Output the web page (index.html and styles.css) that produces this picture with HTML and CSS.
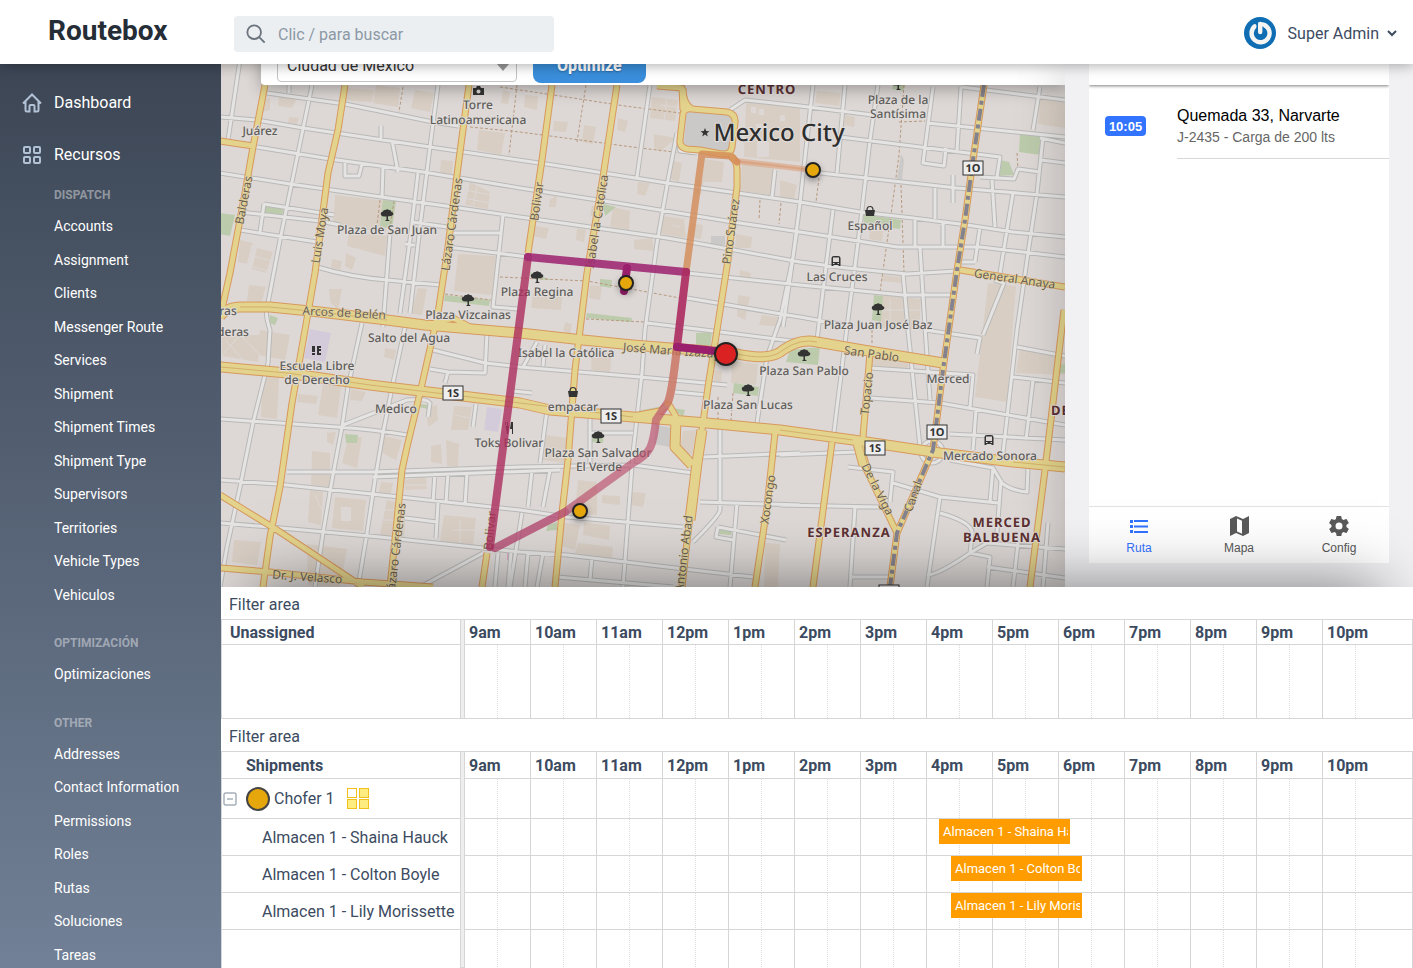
FILE: index.html
```html
<!DOCTYPE html>
<html lang="es">
<head>
<meta charset="utf-8">
<meta name="viewport" content="width=device-width, initial-scale=1">
<title>Routebox</title>
<link rel="stylesheet" href="styles.css">
</head>
<body>
<header class="topbar">
  <a class="brand" href="#">Routebox</a>
  <label class="search">
    <svg class="search-icon" viewBox="0 0 22 22" aria-hidden="true"><circle cx="9" cy="9" r="7.5"/><path d="M14.5 14.5l6 6"/></svg>
    <input type="search" placeholder="Clic / para buscar" aria-label="Buscar">
  </label>
  <button class="account" type="button">
    <svg class="avatar" viewBox="0 0 32 32" aria-hidden="true"><circle cx="16" cy="16" r="16" fill="#0f6db3"/><path d="M10.800 9.300a9 9 0 1 0 9-1.500" fill="none" stroke="#f4f4f2" stroke-width="4.400" stroke-linecap="round"/><path d="M16 6.800v8" stroke="#0f6db3" stroke-width="7" stroke-linecap="round"/><path d="M16.200 7v8" stroke="#f4f4f2" stroke-width="4.400" stroke-linecap="round"/><path d="M16.200 7q4 0 6.500 3" fill="none" stroke="#f4f4f2" stroke-width="4" stroke-linecap="round"/></svg>
    <span>Super Admin</span>
    <svg class="chevron" viewBox="0 0 10 7" aria-hidden="true"><path d="M1 1l4 4 4-4"/></svg>
  </button>
</header>

<div class="shell">
<nav class="sidebar" aria-label="Principal">
  <a class="nav-main" href="#"><svg viewBox="0 0 20 20" aria-hidden="true"><path d="M1 10.500L10 1.500l9 9M3.500 8.500V17a1.500 1.500 0 0 0 1.500 1.500h2.500V13a1 1 0 0 1 1-1h3a1 1 0 0 1 1 1v5.500H15a1.500 1.500 0 0 0 1.500-1.500V8.500"/></svg>Dashboard</a>
  <a class="nav-main" href="#"><svg viewBox="0 0 20 20" aria-hidden="true"><rect x="2" y="2" width="6" height="6" rx="1"/><rect x="12" y="2" width="6" height="6" rx="1"/><rect x="2" y="12" width="6" height="6" rx="1"/><rect x="12" y="12" width="6" height="6" rx="1"/></svg>Recursos</a>
  <h2>Dispatch</h2>
  <ul>
    <li><a href="#">Accounts</a></li><li><a href="#">Assignment</a></li><li><a href="#">Clients</a></li><li><a href="#">Messenger Route</a></li><li><a href="#">Services</a></li><li><a href="#">Shipment</a></li><li><a href="#">Shipment Times</a></li><li><a href="#">Shipment Type</a></li><li><a href="#">Supervisors</a></li><li><a href="#">Territories</a></li><li><a href="#">Vehicle Types</a></li><li><a href="#">Vehiculos</a></li>
  </ul>
  <h2>Optimización</h2>
  <ul><li><a href="#">Optimizaciones</a></li></ul>
  <h2>Other</h2>
  <ul>
    <li><a href="#">Addresses</a></li><li><a href="#">Contact Information</a></li><li><a href="#">Permissions</a></li><li><a href="#">Roles</a></li><li><a href="#">Rutas</a></li><li><a href="#">Soluciones</a></li><li><a href="#">Tareas</a></li>
  </ul>
</nav>

<main class="content">
<section class="stage">
  <div class="map-pane">
    <svg class="map" viewBox="221 64 844 523" preserveAspectRatio="xMidYMid slice" role="img" aria-label="Mapa de rutas">
      <defs>
        <g id="tree"><path d="M-6 0q-1-3 2-3.500 0-2 2.500-1.500 1.500-1.500 3.500 0 2.500 0 2.500 2 2.500.5 1.500 3-2 1.500-5 1.200V4.500l2 1.500h-5l1.500-1.500V1.500Q-5 2-6 0z"/></g>
        <g id="basket"><path d="M-5-1H5L4 5H-4z"/><path d="M-3-1q0-3.500 3-3.500T3-1" fill="none" stroke="#333" stroke-width="1.200"/></g>
        <g id="bus"><path d="M-4.500 5V-3Q-4.500-5-2-5H2Q4.500-5 4.500-3V5H2.500V4h-5v1z"/><rect x="-3" y="-3.500" width="6" height="4.500" fill="#ddd8d6"/><path d="M-3 2.500h1.500M1.500 2.500H3" stroke="#ddd8d6"/></g>
        <g id="shield-s"><rect x="-10" y="-7" width="20" height="14" fill="#eee" stroke="#333"/><text y="4" class="shield-text">1S</text></g>
        <g id="shield-o"><rect x="-10" y="-7" width="20" height="14" fill="#eee" stroke="#333"/><text y="4" class="shield-text">1O</text></g>
        <path id="white-roads" d="M240 60L228 140M220 117L257 120 303 128 430 147 553 165 667 183 800 202 860 212 913 218 967 225 1013 232 1065 237M267 93L345 104 433 122 458 126M257 147L330 159 423 172 520 188 617 203 733 222 800 232 897 247H980L1065 257M220 173L290 184 367 195 453 207 520 217 667 238 707 245 800 262 847 268 907 274 957 271M240 212L320 221 340 225M264 204L334 215M264 204L260 232M240 230L317 242M317 267Q350 277 387 280L440 285M447 247L497 253 528 257M312 85L298 153 280 240 268 303Q264 312 270 330L268 363 253 423 240 487 227 547 220 587M438 85L430 147 420 227 410 313M418 173L410 240 400 313M383 167L382 197M390 233L383 327M362 323L348 387 342 427 332 480 323 533 315 587M405 327L393 383 383 433 375 480 367 533 358 587M503 215L493 307 518 309M453 233H502M398 172L392 140M381 139V126M345 163V176H359L362 164M289 93V85M412 222L447 227M405 244L415 245M220 419L337 427Q370 429 407 435M343 425L407 400Q427 398 430 403L428 417M287 472H373L520 467 633 465 693 473M373 477L560 470M220 480L277 484 400 497 520 510 567 517 683 527M220 523L270 527 380 537 483 548 520 552 567 555 667 567 753 577M557 577L673 587M483 553L420 587M435 473L433 502M448 473L446 502M467 473L465 505M438 503L436 538M405 518L437 522M487 333L485 373 448 372 445 383M433 350L485 363 520 367 640 377 727 385M430 369L448 372M476 404L473 427M498 553L495 587M511 553L508 587M650 85L637 177M677 133L668 180 657 243 645 330 642 373 633 453 628 520 623 587M677 133L680 151 697 153M730 110L745 100 800 106 873 115M687 298L787 315 800 317 850 326M687 273L800 285 903 295H953M775 170L772 197M797 230L783 327M813 85L800 203 793 257 780 320 767 357 757 423M845 85L837 173M878 85L870 140 860 227 847 327 833 440M833 210L817 340M933 87L923 163 944 166 946 148M961 87L957 150M1040 87L1033 130M1043 137L1037 193 1027 260 1017 330 1003 453M1013 193L1000 273M992 180L995 227M927 123L1065 137M962 87L1065 100M840 137L1000 157 997 177M980 177L1014 179 1018 169 1040 172M820 173L957 188 1065 197M935 188V219M915 220V246M943 223V247M980 227L975 262M953 175V203M920 247L925 327 930 400M903 273L908 330 920 447M958 262H975M870 368L973 375 970 407M870 398L940 403 1065 425M950 434L1065 440M976 410L973 450M1033 380L1026 440M1017 347L1065 356M1013 377L1065 383M925 330L980 338 977 354M780 455L857 452M848 467L893 472 890 502M893 483L940 497 998 503M993 467L990 502M1001 480L997 533M780 505L880 507M855 507L850 587M940 497L927 587M940 513Q975 523 972 535L970 553Q938 575 927 575M970 553L987 543 1065 549M970 553L990 557 987 587M850 577H890M987 567L1065 578M1018 543L1013 587M1048 523L1043 587M950 460L993 468 1002 483Q1010 490 1027 492L1028 467M994 280L1004 283 983 335M513 391L532 393M547 410L540 463M590 417V463M590 433H633M675 392L707 395M720 430V510Q720 515 693 542M703 457L800 453M700 502L800 505M737 503L730 587M718 527L786 540M718 527L716 537 733 540M532 470L528 507M550 470L543 507M522 513L510 587M543 553L537 587M592 557L590 580M537 342L523 367M545 345L543 366M647 323L705 330 800 342M528 553L525 587M1040 138L1065 143M1041 160L1065 163"/>
        <path id="minor-yellow" d="M265 85L253 147 245 193 230 273 220 318M345 85L338 130 328 173 315 273 305 330 292 403 280 487 270 537 263 587M469 85L458 167 448 247 438 313 432 340 420 393 407 447 402 470 397 520 390 587M552 85L542 160 528 253M487 553L482 587M617 85L603 177 587 273 580 330 575 370 568 460 562 513 555 587M657 86L682 88 683 110M692 109L727 112Q736 114 735 123L732 147Q731 155 722 154L700 150 687 149Q679 147 680 140L683 114Q684 108 692 109M683 88Q683 104 692 109M730 155Q737 160 737 170V187L728 260 717 330 708 387 702 430 697 463 688 533 682 587M858 443L865 467 897 533M870 353L863 437M775 433L767 507 755 587M832 442L813 587M1064 310L1045 470 1030 587M960 270L1065 287M220 495L277 530 363 587M220 568L270 572 363 582 433 587M220 141L253 146M984 85L973 160 965 220 957 270 943 370 933 450 917 487 897 533 890 587M668 403L678 420M633 416L660 411 670 403M425 326L453 318 470 327"/>
        <path id="major-yellow" d="M220 316Q228 307 240 307H270L320 312 387 320 425 325 520 333 583 340 633 345 733 353Q770 362 783 350 800 338 817 342L863 350 943 363M220 367L287 373 370 385 520 403 550 410 633 417 707 423 780 430 853 440 940 453 1013 462 1065 467M702 430L697 463 690 520M676 420L675 447 692 465M858 443L864 465"/>
      </defs>
      <rect x="221" y="64" width="844" height="523" fill="#ddd8d6"/>
      <g fill="#d8cec4">
        <path d="M335 195L387 201 386 232 333 226zM349 232L387 236 385 256 347 246zM345 88L374 90 372 102 343 100zM376 85L400 88 398 107 373 103zM458 254L496 256 492 295 454 291zM479 130L505 133 501 155 477 150zM441 160L453 161 452 174 440 173zM260 100L270 98 270 110 260 112zM279 96L297 98 292 108 278 106zM289 117L299 118 297 124 288 123zM490 192L470 182 465 205 488 209zM415 90L434 93 430 112 411 108zM240 240L253 243 248 264 238 262zM257 248L273 252 266 273 252 269zM249 285L266 287 261 303 247 301zM332 259L342 261 340 270 331 268zM346 253L356 258 352 270 345 266zM329 289L342 289 338 310 330 302zM418 288L427 289 422 315 411 314zM262 372L279 378 277 419 261 417zM298 394L318 396 316 404 297 402zM323 382L341 385 337 418 318 415zM351 389L366 392 362 401 350 400zM312 451L330 453 330 487 311 485zM327 433L336 432 333 445 327 442zM348 438L362 437 357 468 342 463zM384 436L402 440 396 460 382 453zM335 497L366 500 363 531 332 528zM381 482L393 483 390 497 378 496zM310 490L323 492 321 525 308 522zM234 540L261 542 257 565 232 562zM307 544L347 549 340 587 308 585zM446 440L459 444 458 467 447 466zM431 446L441 444 442 464 431 462zM404 480L426 477 427 489 405 490zM426 408L437 405 438 420 428 427zM454 406L472 407 468 430 451 430zM387 500L406 505 404 540 380 535zM444 515L476 518 473 546 440 541zM385 348L396 350 394 360 384 357z"/>
        <path d="M525 95L538 96 537 110 524 107zM503 90L510 92 508 104 501 103zM554 121L568 122 566 132 553 131zM584 125L596 127 593 144 582 142zM618 118L628 121 625 132 617 130zM652 97L678 100 675 121 650 118zM654 134L676 138 660 152 654 148zM670 160L682 163 679 182 668 178zM705 159L724 162 722 182 702 182zM742 161L774 168 771 195 740 191zM746 103L800 106V162L744 157zM662 216L684 219 686 238 661 234zM690 223L703 225 701 239 689 237zM696 180L704 181 701 195 695 193zM613 207L630 211 629 230 610 227zM592 206L600 207 597 218 590 215zM535 226L549 228 546 239 533 236zM634 240L652 238 654 251 634 249zM736 234L752 237 751 248 735 248zM740 270L751 273 750 281 739 280zM577 228L586 230 584 242 576 240zM550 200L557 194 556 207 549 207zM638 182L650 183 645 196 637 194zM590 285L602 286 600 300 589 298zM533 293L562 297 561 310 531 308zM738 295L750 297 745 320 737 316zM762 315L785 318 783 327 759 325zM565 322L572 324 570 334 563 331zM592 349L612 350 610 373 591 370zM732 361L758 364 756 385 731 383zM714 370L722 371 721 385 714 384zM683 431L696 430 692 455 680 448zM546 435L567 438 564 463 543 460zM578 480L597 482 597 515 575 513zM602 495L620 496 620 505 602 503zM632 492L646 493 643 507 631 505zM561 522L580 525 575 550 558 545zM584 522L610 526 609 540 583 535zM578 543L613 547 612 558 575 553zM765 543L780 544 778 587 764 587z"/>
        <path d="M817 91L841 93 839 106 815 103zM780 116L792 117 786 145 780 145zM845 115L855 117 854 127 844 125zM1040 98L1065 103V128L1038 124zM780 180L797 185 794 200 780 197zM870 230L883 231 882 241 869 239zM883 275L902 277V283L882 281zM882 295L921 299 919 330 878 328zM988 283L1016 286 1007 402 975 397zM1020 347L1065 354V375L1016 373zM871 358L908 361V370L871 367zM260 330L290 335 285 360 258 355zM222 335L262 335 258 362 222 356z"/>
      </g>
      <path fill="#ddd8d6" d="M341 507h10v14h-10zM751 107h5v6h-5zM759 109h5v6h-5zM780 115h5v6h-5zM756 124h6v7h-6zM757 142h12v15h-12z"/>
      <g stroke="#ddd8d6" fill="none"><path d="M235 330L262 357M225 340L248 365M245 330L222 355M252 245L246 270M250 255L275 262M248 265L270 272M465 190L492 195M463 198L490 203M478 182L473 207M400 485H427M405 497L435 504M380 510H402M383 520H400M660 105L677 107M667 97L664 120M598 90L596 105M672 225L680 227M880 310H920M890 300V328M905 300V328M455 415L470 418M315 495L322 510M452 530H475M460 520V545"/></g>
      <g fill="#bccbab">
        <path d="M383 200L396 201 392 229 380 226zM265 206L284 208 282 216 264 214zM220 213L235 215 230 236 220 234zM445 295L490 300 489 306 444 301zM270 315L278 318 275 325 269 323zM530 272L541 276 552 280 532 279zM603 204L616 207 605 216zM600 279L612 280 611 288 600 286zM587 313L632 318 631 322 586 318zM893 85L905 85 903 91 892 89zM863 214L901 220 900 229 864 225zM874 295L883 296 881 322 872 320zM1020 134L1044 136 1041 155 1019 152zM1000 160L1009 162 1014 175 998 176zM345 434L358 435 357 443 346 443zM420 404L428 405 428 409 419 407zM696 333L712 332 710 349 696 345zM734 383L759 387 758 396 733 393zM638 411L668 405 665 411zM672 408L685 410 683 417zM592 432L604 433 603 443 591 442zM548 525L557 522 557 530 546 531zM720 527L733 529 731 535 719 534zM790 350L820 347 818 365 786 362zM1060 365L1065 364V373H1059z"/>
      </g>
      <path fill="#d4cbda" d="M310 329L331 333 325 362 304 358zM487 407L502 409 498 432 484 430z"/>
      <path fill="#d9a9c4" d="M507 552h5v8h-5z"/>
      <path fill="#cbc9c7" d="M690 111L727 114Q732 115 731 122L729 147Q729 153 721 152L688 148Q683 147 684 142L686 117Q687 111 690 111M656 425L672 428 670 447 654 444zM711 236H725V245H711zM901 154L904 160 902 180 897 179z"/>
      <g fill="none" stroke="#b89a7f" stroke-dasharray="3 2">
        <path d="M403 87L399 112M517 85L509 155M470 127L520 132 640 148 700 155M500 87L560 96 625 106 680 113M586 85L577 142M904 85L899 155 893 200 880 292M901 185L904 272M899 122L925 121M819 178L816 202M760 200L759 220M781 203L779 224M500 277L587 281 680 298M586 319L645 322M718 397V430M733 393L731 421M1017 153L1018 169M380 200L377 225M394 201L390 228M445 294L491 300M872 325V345"/>
      </g>
      <g fill="none" stroke-linejoin="round">
        <use href="#white-roads" stroke="#b9b9b8" stroke-width="5"/>
        <circle cx="932" cy="452" r="11" stroke="#b9b9b8" stroke-width="5"/>
        <use href="#white-roads" stroke="#e5e4e3" stroke-width="3"/>
        <circle cx="932" cy="452" r="11" stroke="#e5e4e3" stroke-width="3"/>
        <use href="#minor-yellow" stroke="#d7995d" stroke-width="7"/>
        <use href="#major-yellow" stroke="#d7995d" stroke-width="11"/>
        <use href="#minor-yellow" stroke="#e3d38c" stroke-width="5"/>
        <use href="#major-yellow" stroke="#e3d38c" stroke-width="9"/>
        <path d="M221 367L287 373 370 385 520 403 633 417M240 307H270L320 312 387 320M733 353Q770 362 783 350 800 338 817 342M780 430L853 440M1013 462L1065 467M862 445L868 467 896 525" stroke="#d3b16c"/>
        <path d="M984 85L973 160 965 220 957 270 943 370 933 450 917 487 897 533 890 587" stroke="#85828f" stroke-width="4" stroke-dasharray="12 4 4 4"/>
      </g>

      <g fill="#333">
        <use href="#tree" x="387" y="215"/><use href="#tree" x="468" y="300"/><use href="#tree" x="537" y="277"/><use href="#tree" x="898" y="84"/><use href="#tree" x="878" y="309"/><use href="#tree" x="804" y="355"/><use href="#tree" x="748" y="390"/><use href="#tree" x="598" y="437"/>
        <use href="#basket" x="870" y="211"/><use href="#basket" x="573" y="392"/>
        <use href="#bus" x="836" y="261"/><use href="#bus" x="989" y="440"/>
        <path d="M473 88h3l1-2h3l1 2h3v7h-11zM312 346h3v6h-3zM312 353h3v2h-3zM317 346h4v2h-2v1h2v2h-2v2h2v2h-4zM505 422h1v4h1v-4h1v4h1l-1 8h-1zM511 422h2v12h-1v-5h-2z"/>
        <circle cx="478.500" cy="91.500" r="2" fill="#ddd8d6"/>
        <path d="M705 128l1.200 3 3.300.2-2.600 2 .9 3.200-2.800-1.800-2.800 1.800.9-3.200-2.600-2 3.300-.2z"/>
      </g>
      <g class="place">
        <text x="260" y="135">Juárez</text><text x="478" y="109">Torre</text><text x="478" y="124">Latinoamericana</text>
        <text x="387" y="234">Plaza de San Juan</text><text x="468" y="319">Plaza Vizcainas</text><text x="537" y="296">Plaza Regina</text>
        <text x="409" y="342">Salto del Agua</text><text x="566" y="357">Isabel la Católica</text><text x="317" y="370">Escuela Libre</text><text x="317" y="384">de Derecho</text>
        <text x="396" y="413">Medico</text><text x="573" y="411">empacar</text><text x="509" y="447">Toks Bolivar</text><text x="598" y="457">Plaza San Salvador</text><text x="599" y="471">El Verde</text>
        <text x="748" y="409">Plaza San Lucas</text><text x="804" y="375">Plaza San Pablo</text><text x="878" y="329">Plaza Juan José Baz</text><text x="837" y="281">Las Cruces</text><text x="870" y="230">Español</text>
        <text x="898" y="104">Plaza de la</text><text x="898" y="118">Santísima</text><text x="948" y="383">Merced</text><text x="990" y="460">Mercado Sonora</text><text x="228" y="315">ras</text><text x="233" y="336">deras</text>
      </g>
      <g class="street">
        <text transform="translate(248 201) rotate(-79)">Balderas</text>
        <text transform="translate(324 236) rotate(-81)">Luis Moya</text>
        <text transform="translate(456 225) rotate(-82)">Lázaro Cárdenas</text>
        <text transform="translate(541 202) rotate(-82)">Bolivar</text>
        <text transform="translate(601 222) rotate(-81)">Isabel la Catolica</text>
        <text transform="translate(735 232) rotate(-82)">Pino Suárez</text>
        <text transform="translate(344 317) rotate(3)">Arcos de Belén</text>
        <text transform="translate(675 355) rotate(4)">José María Izazaga</text>
        <text transform="translate(871 358) rotate(8)">San Pablo</text>
        <text transform="translate(1014 283) rotate(8)">General Anaya</text>
        <text transform="translate(871 394) rotate(-84)">Topacio</text>
        <text transform="translate(874 491) rotate(63)">De la Viga</text>
        <text transform="translate(917 498) rotate(-70)">Canal</text>
        <text transform="translate(772 500) rotate(-82)">Xocongo</text>
        <text transform="translate(688 554) rotate(-83)">Antonio Abad</text>
        <text transform="translate(400 550) rotate(-83)">Lázaro Cárdenas</text>
        <text transform="translate(494 531) rotate(-84)">Bolivar</text>
        <text transform="translate(307 581) rotate(4)">Dr. J. Velasco</text>
      </g>
      <g class="district">
        <text x="767" y="94">CENTRO</text><text x="849" y="537">ESPERANZA</text><text x="1002" y="527">MERCED</text><text x="1002" y="542">BALBUENA</text><text class="from-start" x="1051" y="415">DE</text>
      </g>
      <text class="city" x="779" y="141">Mexico City</text>
      <use href="#shield-s" x="453" y="393"/><use href="#shield-s" x="611" y="416"/><use href="#shield-s" x="875" y="448"/>
      <use href="#shield-o" x="973" y="168"/><use href="#shield-o" x="937" y="432"/><use href="#shield-o" x="889" y="592"/>

      <g fill="none" stroke-linejoin="round" stroke-linecap="round">
        <path d="M736 161L812 170" stroke="#dd9c74" stroke-opacity=".55" stroke-width="6"/>
        <path d="M736 161L812 170" stroke="#d8936a" stroke-opacity=".5" stroke-width="2"/>
        <path d="M686 272L702 154 730 156 737 162" stroke="#d58b56" stroke-opacity=".8" stroke-width="7"/>
        <path d="M677 347Q672 393 668 402L656 420Q654 440 650 448T633 463L565 512 495 548" stroke="#bb4f6c" stroke-opacity=".66" stroke-width="8"/>
        <path d="M677 347Q672 393 668 402" stroke="#d9924d" stroke-opacity=".4" stroke-width="8"/>
        <path d="M528 257L490 547" stroke="#ac2d5d" stroke-opacity=".8" stroke-width="8"/>
        <path d="M495 548L565 512" stroke="#a83070" stroke-opacity=".3" stroke-width="8"/>
        <path d="M528 257L686 272" stroke="#a02a73" stroke-opacity=".9" stroke-width="8"/>
        <path d="M686 272L677 347" stroke="#ad2f62" stroke-opacity=".92" stroke-width="8"/>
        <path d="M677 347L726 352M627 268L624 291" stroke="#9a206d" stroke-width="8"/>
      </g>
      <g class="stops">
        <circle cx="813" cy="170" r="7"/><circle cx="626" cy="283" r="7"/><circle cx="580" cy="511" r="7"/><circle class="depot" cx="726" cy="354" r="11"/>
      </g>
    </svg>
    <form class="map-tools">
      <span class="select-wrap">
        <select aria-label="Ciudad"><option>Ciudad de Mexico</option></select>
        <svg viewBox="0 0 12 7" aria-hidden="true"><path d="M0 0h12L6 7z"/></svg>
      </span>
      <button class="optimize" type="button">Optimize</button>
    </form>
  </div>

  <aside class="preview">
    <div class="phone">
      <div class="phone-head"></div>
      <ul class="stops-list">
        <li><span class="time">10:05</span><div class="stop-text"><strong>Quemada 33, Narvarte</strong><span>J-2435 - Carga de 200 lts</span></div></li>
      </ul>
      <div class="tabs">
        <button class="tab active" type="button"><svg viewBox="0 0 24 24" aria-hidden="true"><path d="M3 6h3v3H3zM3 11h3v3H3zM3 16h3v3H3zM7 6h14v2H7zM7 11.500h14v2H7zM7 17h14v2H7z"/></svg>Ruta</button>
        <button class="tab" type="button"><svg viewBox="0 0 24 24" aria-hidden="true"><path fill-rule="evenodd" d="M22 2l-6 3-7-3-6 3v17l6-3 7 3 6-3zM10 4.500l5 2.200v13L10 17.500z"/></svg>Mapa</button>
        <button class="tab" type="button"><svg viewBox="0 0 24 24" aria-hidden="true"><path d="M19.400 13a7.500 7.500 0 0 0 0-2l2.200-1.700a.5.500 0 0 0 .1-.6l-2-3.500a.5.500 0 0 0-.6-.2l-2.600 1a8 8 0 0 0-1.700-1l-.4-2.600a.5.500 0 0 0-.5-.4h-4a.5.500 0 0 0-.5.400L9 5a8 8 0 0 0-1.700 1l-2.500-1a.5.500 0 0 0-.6.200l-2 3.500a.5.500 0 0 0 .1.600L4.500 11a7.500 7.500 0 0 0 0 2l-2.100 1.700a.5.500 0 0 0-.1.600l2 3.500c.1.200.4.300.6.200l2.500-1a8 8 0 0 0 1.700 1l.4 2.600c0 .2.200.4.500.4h4c.3 0 .5-.2.500-.4l.4-2.600a8 8 0 0 0 1.700-1l2.500 1c.2.100.5 0 .6-.2l2-3.500a.5.500 0 0 0-.1-.6zM12 15.500a3.500 3.500 0 1 1 0-7 3.500 3.500 0 0 1 0 7z"/></svg>Config</button>
      </div>
    </div>
  </aside>
</section>

<section class="schedule">
  <div class="filter">Filter area</div>
  <table class="timeline">
    <colgroup><col class="c-name"><col class="c-divider"><col class="c-slot" span="13"><col></colgroup>
    <tbody>
    <tr><th class="name">Unassigned</th><td class="divider" rowspan="2"></td><th>9am</th><th>10am</th><th>11am</th><th>12pm</th><th>1pm</th><th>2pm</th><th>3pm</th><th>4pm</th><th>5pm</th><th>6pm</th><th>7pm</th><th>8pm</th><th>9pm</th><th>10pm</th></tr>
    <tr class="empty"><td class="name"></td><td></td><td></td><td></td><td></td><td></td><td></td><td></td><td></td><td></td><td></td><td></td><td></td><td></td><td></td></tr>
    </tbody>
  </table>
  <div class="filter">Filter area</div>
  <table class="timeline shipments">
    <colgroup><col class="c-name"><col class="c-divider"><col class="c-slot" span="13"><col></colgroup>
    <tbody>
    <tr><th class="name indent">Shipments</th><td class="divider" rowspan="6"></td><th>9am</th><th>10am</th><th>11am</th><th>12pm</th><th>1pm</th><th>2pm</th><th>3pm</th><th>4pm</th><th>5pm</th><th>6pm</th><th>7pm</th><th>8pm</th><th>9pm</th><th>10pm</th></tr>
    <tr class="driver"><td class="name"><div class="driver-cell"><button class="toggle" type="button" aria-label="Contraer Chofer 1"><svg viewBox="0 0 14 14"><rect x="1" y="1" width="12" height="12" rx="1"/><path d="M4 7h6"/></svg></button><i class="dot"></i><span>Chofer 1</span><svg class="blocks" viewBox="0 0 22 21" aria-hidden="true"><rect x=".5" y=".5" width="9" height="9" fill="#fff"/><rect x="12.500" y=".5" width="9" height="9"/><rect x=".5" y="11.500" width="9" height="9"/><rect x="12.500" y="11.500" width="9" height="9"/></svg></div></td><td></td><td></td><td></td><td></td><td></td><td></td><td></td><td></td><td></td><td></td><td></td><td></td><td></td><td></td></tr>
    <tr class="job"><td class="name">Almacen 1 - Shaina Hauck</td><td></td><td></td><td></td><td></td><td></td><td></td><td></td><td class="has-event"><a class="event" href="#">Almacen 1 - Shaina Hauck</a></td><td></td><td></td><td></td><td></td><td></td><td></td></tr>
    <tr class="job"><td class="name">Almacen 1 - Colton Boyle</td><td></td><td></td><td></td><td></td><td></td><td></td><td></td><td class="has-event"><a class="event later" href="#">Almacen 1 - Colton Boyle</a></td><td></td><td></td><td></td><td></td><td></td><td></td></tr>
    <tr class="job"><td class="name">Almacen 1 - Lily Morissette</td><td></td><td></td><td></td><td></td><td></td><td></td><td></td><td class="has-event"><a class="event later" href="#">Almacen 1 - Lily Morissette</a></td><td></td><td></td><td></td><td></td><td></td><td></td></tr>
    <tr class="rest"><td class="name"></td><td></td><td></td><td></td><td></td><td></td><td></td><td></td><td></td><td></td><td></td><td></td><td></td><td></td><td></td></tr>
    </tbody>
  </table>
</section>
</main>
</div>
</body>
</html>
```

FILE: styles.css
```css
* { box-sizing: border-box; }
body {
  margin: 0;
  height: 100vh;
  display: flex;
  flex-direction: column;
  overflow: hidden;
  background: #fff;
  color: #3c4b5f;
  font: 16px/20px Roboto, "Liberation Sans", sans-serif;
}
button, input, select { font: inherit; color: inherit; }
button { border: 0; background: none; padding: 0; cursor: pointer; }
a { color: inherit; text-decoration: none; }
ul { list-style: none; margin: 0; padding: 0; }

.topbar {
  position: relative;
  z-index: 5;
  flex: none;
  height: 64px;
  display: flex;
  align-items: center;
  padding: 0 16px 0 0;
  background: #fff;
  box-shadow: 0 2px 12px rgba(0, 0, 0, .3);
}
.brand {
  width: 234px;
  padding: 0 0 2px 48px;
  font-size: 28px;
  line-height: 32px;
  font-weight: 700;
  color: #252d37;
}
.search {
  display: flex;
  align-items: center;
  gap: 12px;
  width: 320px;
  height: 36px;
  margin-top: 4px;
  padding: 0 12px;
  border-radius: 4px;
  background: #ebeff2;
}
.search-icon { width: 20px; height: 20px; flex: none; fill: none; stroke: #6b747d; stroke-width: 2; }
.search input { flex: 1; min-width: 0; border: 0; padding: 2px 0 0; background: none; outline: 0; }
.search input::placeholder { color: #8b98a5; opacity: 1; }
.account { display: flex; align-items: center; margin-left: auto; padding-top: 2px; }
.account span { padding-top: 2px; }
.avatar { width: 32px; height: 32px; margin-right: 12px; }
.chevron { width: 10px; height: 7px; margin-left: 8px; fill: none; stroke: #3c4b5f; stroke-width: 2; }

.shell { flex: 1; min-height: 0; display: flex; }
.sidebar {
  flex: none;
  width: 221px;
  padding: 29px 0 0;
  overflow: hidden;
  background: linear-gradient(#3c4655, #718096);
  color: #fff;
  position: relative;
  z-index: 4;
}
.nav-main { display: flex; align-items: center; gap: 12px; height: 20px; margin-bottom: 32px; padding-left: 22px; }
.nav-main svg { width: 20px; height: 20px; fill: none; stroke: #b2c2d6; stroke-width: 2; }
.sidebar h2 {
  margin: 0 0 16px 54px;
  font-size: 12px;
  line-height: 14px;
  font-weight: 700;
  text-transform: uppercase;
  color: rgba(255, 255, 255, .42);
}
.nav-main + h2 { margin-top: -9px; }
.sidebar ul { display: grid; gap: 16px; margin: 0 0 32px 54px; font-size: 14px; line-height: 1.25; }

.content { flex: 1; min-width: 0; display: flex; flex-direction: column; }
.stage { flex: 1; min-height: 0; display: flex; overflow: hidden; }
.map-pane { flex: 1; min-width: 0; position: relative; }
.map { display: block; width: 100%; height: 100%; }
.map text { text-anchor: middle; font-family: "Noto Sans", "Liberation Sans", sans-serif; paint-order: stroke; stroke-linejoin: round; text-rendering: geometricPrecision; }
.place { font-size: 12px; font-weight: 500; fill: #605d5a; stroke: #e2dedc; stroke-width: 2px; }
.street { font-size: 12px; fill: #6e5f4a; stroke: #e0d7b8; stroke-width: 1px; }
.district { font-size: 13px; font-weight: 700; letter-spacing: 1px; fill: #5d3032; stroke: #e2dedc; stroke-width: 2px; }
.map .from-start { text-anchor: start; }
.city { font-size: 24px; font-weight: 500; fill: #2e2e2e; stroke: #e2dedc; stroke-width: 2px; }
.shield-text { font-size: 11px; font-weight: 700; fill: #333; }
.stops circle { fill: #e6a70c; stroke: #222; stroke-width: 2; filter: drop-shadow(0 3px 3px rgba(0, 0, 0, .35)); }
.stops .depot { fill: #da2222; }
.map-tools {
  position: absolute;
  top: -24px;
  left: 40px;
  right: 0;
  display: flex;
  gap: 16px;
  padding: 6px 16px 2px;
  border-radius: 0 0 0 4px;
  background: #fff;
  box-shadow: 0 4px 16px rgba(0, 0, 0, .3);
}
.select-wrap { position: relative; }
.select-wrap select {
  appearance: none;
  width: 240px;
  height: 36px;
  padding: 4px 9px 0;
  border: 1px solid #c4c4c4;
  border-radius: 4px;
  background: #fff;
  color: #333;
}
.select-wrap svg { position: absolute; right: 8px; top: 18px; width: 12px; height: 7px; fill: #999; }
.optimize {
  height: 37px;
  padding: 2px 24px 0;
  border-radius: 8px;
  background: #3a8edb;
  color: #fff;
  font-weight: 800;
  text-shadow: 0 1px 2px rgba(0, 0, 0, .3);
}

.preview {
  position: relative;
  flex: none;
  display: flex;
  padding: 0 24px 24px;
  background: #f1f1f4;
  box-shadow: 0 0 48px rgba(0, 0, 0, .2);
}
.phone { width: 300px; display: flex; flex-direction: column; background: #fff; font-family: "Liberation Sans", Arial, sans-serif; }
.phone-head { height: 21px; box-shadow: 0 1px 3px rgba(0, 0, 0, .5); clip-path: inset(0 0 -6px); }
.stops-list { flex: 1; padding-top: 19px; }
.stops-list li { display: flex; padding-left: 16px; }
.time {
  width: 41px;
  height: 20px;
  margin: 12px 31px 0 0;
  border-radius: 4px;
  background: #3273ff;
  color: #fff;
  font-size: 13px;
  line-height: 21px;
  font-weight: 700;
  text-align: center;
}
.stop-text { flex: 1; display: grid; gap: 1px; padding: 2px 0 11px; border-bottom: 1px solid #d8d8d8; }
.stop-text strong { font-weight: 400; color: #000; }
.stop-text span { font-size: 14px; color: #666; }
.tabs { display: flex; height: 57px; border-top: 1px solid #e3e3e5; }
.tab { flex: 1; display: flex; flex-direction: column; align-items: center; justify-content: flex-start; padding-top: 7px; font-size: 12px; line-height: 20px; color: #595959; }
.tab svg { width: 24px; height: 24px; fill: currentColor; }
.tab.active { color: #3273ff; }

.schedule { position: relative; flex: none; background: #fff; box-shadow: 0 -34px 60px -34px rgba(0, 0, 0, .5); }
.filter { height: 32px; padding: 8px 8px 0; line-height: 20px; }
.timeline { width: 100%; table-layout: fixed; border-collapse: separate; border-spacing: 0; border-top: 1px solid #d6d6d6; }
.c-name { width: 240px; }
.c-divider { width: 4px; }
.c-slot { width: 66px; }
.timeline th, .timeline td { height: 25px; padding: 0 4px; border: 0 solid #d6d6d6; border-width: 0 1px 1px 0; text-align: left; }
.timeline th { padding-top: 2px; font-weight: 700; }
.timeline td { background: linear-gradient(#ddd 1px, transparent 1px) 32px 0 / 1px 2px repeat-y; }
.timeline .divider { padding: 0; background: #eee; }
.timeline .name { border-left-width: 1px; padding-left: 8px; background: none; white-space: nowrap; }
.timeline .empty td { height: 74px; }
.shipments th { height: 27px; }
.shipments th.indent { padding-left: 24px; }
.shipments .driver td { height: 40px; }
.shipments .driver .name { padding-left: 1px; }
.shipments .job td { height: 37px; }
.shipments .job .name { padding: 2px 0 0 40px; }
.shipments .rest td { height: 38px; border-bottom: 0; }
.driver-cell { display: flex; align-items: center; }
.toggle { width: 14px; height: 14px; display: flex; margin-right: 9px; }
.toggle svg { width: 14px; height: 14px; fill: none; stroke: #7b8794; }
.dot { width: 24px; height: 24px; margin-right: 4px; border: 2px solid #444; border-radius: 50%; background: #e6a70c; }
.blocks { width: 22px; height: 21px; margin-left: 12px; fill: #fdec80; stroke: #f2c01b; }
.timeline .has-event { position: relative; }
.event {
  position: absolute;
  z-index: 1;
  top: 0;
  left: 12px;
  width: 131px;
  height: 25px;
  padding: 0 4px;
  border-right: 2px solid #ff9d00;
  background: #ff9d00;
  color: #fff;
  font-size: 13px;
  line-height: 25px;
  white-space: nowrap;
  overflow: hidden;
}
.event.later { left: 24px; }
```
